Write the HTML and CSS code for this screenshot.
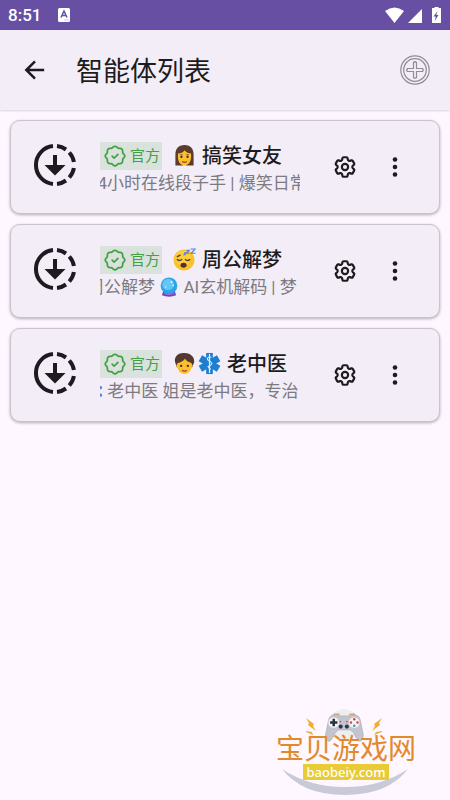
FILE: index.html
```html
<!DOCTYPE html>
<html lang="zh-CN">
<head>
<meta charset="utf-8">
<meta name="viewport" content="width=device-width, initial-scale=1">
<title>智能体列表</title>
<link rel="stylesheet" href="styles.css">
</head>
<body>
<svg class="defs" aria-hidden="true">
  <symbol id="agent" viewBox="0 0 50 50">
    <g fill="none" stroke="currentColor" stroke-width="4">
      <path d="M23 6.1A19 19 0 0 0 23 43.900"/>
      <path d="M27 6.1A19 19 0 0 1 36 9.500"/>
      <path d="M39.300 12.500A19 19 0 0 1 43.900 22"/>
      <path d="M43.900 28A19 19 0 0 1 39.300 37.500"/>
      <path d="M36 40.500A19 19 0 0 1 27 43.900"/>
    </g>
    <path fill="currentColor" d="M23 15h4v10h8.500L25 35.500 14.500 25H23z"/>
  </symbol>
  <symbol id="verified" viewBox="0 0 24 24">
    <g fill="none" stroke="currentColor" stroke-width="1.600" stroke-linecap="round" stroke-linejoin="round">
      <path d="M5 7.2A2.2 2.2 0 0 1 7.2 5h1a2.200 2.200 0 0 0 1.550-.64l.7-.7a2.200 2.200 0 0 1 3.120 0l.7.7c.412.41.97.64 1.550.64h1a2.200 2.200 0 0 1 2.200 2.200v1c0 .58.23 1.138.64 1.550l.7.7a2.200 2.200 0 0 1 0 3.120l-.7.7a2.200 2.200 0 0 0-.64 1.550v1a2.200 2.200 0 0 1-2.200 2.200h-1a2.200 2.200 0 0 0-1.550.64l-.7.7a2.200 2.200 0 0 1-3.120 0l-.7-.7a2.200 2.200 0 0 0-1.550-.64h-1a2.200 2.200 0 0 1-2.200-2.200v-1a2.200 2.200 0 0 0-.64-1.550l-.7-.7a2.200 2.200 0 0 1 0-3.120l.7-.7A2.200 2.200 0 0 0 5 8.200z"/>
      <path d="M9.300 12.200l1.900 1.700 3.500-3.300"/>
    </g>
  </symbol>
  <symbol id="gear" viewBox="0 0 24 24">
    <g fill="none" stroke="currentColor" stroke-width="2" stroke-linejoin="round">
      <path d="M9.594 3.940c.09-.542.56-.94 1.110-.94h2.593c.55 0 1.020.398 1.110.94l.213 1.281c.063.374.313.686.645.87.074.04.147.083.22.127.325.196.72.257 1.075.124l1.217-.456a1.125 1.125 0 0 1 1.370.49l1.296 2.247a1.125 1.125 0 0 1-.26 1.431l-1.003.827c-.293.241-.438.613-.43.992a7.723 7.723 0 0 1 0 .255c-.008.378.137.75.43.991l1.004.827c.424.35.534.955.26 1.430l-1.298 2.247a1.125 1.125 0 0 1-1.369.491l-1.217-.456c-.355-.133-.75-.072-1.076.124a6.470 6.470 0 0 1-.22.128c-.331.183-.581.495-.644.869l-.213 1.281c-.09.543-.56.94-1.110.94h-2.594c-.55 0-1.019-.398-1.110-.94l-.213-1.281c-.062-.374-.312-.686-.644-.87a6.520 6.520 0 0 1-.22-.127c-.325-.196-.72-.257-1.076-.124l-1.217.456a1.125 1.125 0 0 1-1.369-.49l-1.297-2.247a1.125 1.125 0 0 1 .26-1.431l1.004-.827c.292-.24.437-.613.43-.991a6.932 6.932 0 0 1 0-.255c.007-.38-.138-.751-.43-.992l-1.004-.827a1.125 1.125 0 0 1-.26-1.430l1.297-2.247a1.125 1.125 0 0 1 1.370-.491l1.216.456c.356.133.751.072 1.076-.124.072-.044.146-.087.22-.128.332-.183.582-.495.644-.869z"/>
      <circle cx="12" cy="12" r="2.900"/>
    </g>
  </symbol>
  <symbol id="dots" viewBox="0 0 24 24">
    <g fill="currentColor"><circle cx="12" cy="4.500" r="2.300"/><circle cx="12" cy="12" r="2.300"/><circle cx="12" cy="19.500" r="2.300"/></g>
  </symbol>
  <symbol id="woman" viewBox="0 0 24 24">
    <path fill="#5c3a2e" d="M12 1C5.500 1 2.500 5 2.500 11v11.500H10l2-1 2 1h7.500V11C21.500 5 18.500 1 12 1z"/>
    <path fill="#fbc02d" d="M12 6.500c2 2.500 4.500 3 6.800 3.500.7 7.500-1.800 12.500-6.800 12.500S4.500 17.500 5.200 10C8 9.500 10.500 9 12 6.500z"/>
    <circle cx="8.800" cy="13.500" r="1.200" fill="#40281f"/><circle cx="15.200" cy="13.500" r="1.200" fill="#40281f"/>
    <path d="M9.500 18.200q2.500 2 5 0" fill="none" stroke="#a8432a" stroke-width="1.200"/>
    <path d="M7.500 11.300h2.500M14 11.300h2.500" stroke="#5c3a2e" stroke-width=".9"/>
  </symbol>
  <symbol id="sleep" viewBox="0 0 24 24">
    <circle cx="11.500" cy="12.500" r="11" fill="#fbc12d"/>
    <circle cx="10.500" cy="10.500" r="8" fill="#ffd84a" opacity=".6"/>
    <path d="M4.500 12q2 2.200 4.500 0M13 12q2.500 2.200 4.500 0M4.500 9l3-1.500" fill="none" stroke="#5d4037" stroke-width="1.500" stroke-linecap="round"/>
    <ellipse cx="11" cy="18" rx="3.200" ry="2.600" fill="#4e342e"/>
    <path d="M18.500 1h4.500l-4 4.500h4.500M14 2.500h3l-3 3h3M11.500 5h2l-2 2h2" fill="none" stroke="#5b7fe0" stroke-width="1.200"/>
  </symbol>
  <symbol id="person" viewBox="0 0 24 24">
    <path fill="#543930" d="M11 1C4 1 1 6 2.300 11l1.700 5h16l2-5C23 5.500 18.500.5 11 1z"/>
    <path fill="#fbc02d" d="M4.800 11.500C8 11 11 9.500 12.500 7c1.500 2.500 4 3.500 6.700 4.500l.6 1.500c1 .3.800 3.200-.6 3.500-1 4-3.600 6.500-7.200 6.500s-6.200-2.500-7.200-6.500c-1.400-.3-1.600-3.200-.6-3.500z"/>
    <circle cx="8.500" cy="14.500" r="1.200" fill="#40281f"/><circle cx="15.500" cy="14.500" r="1.200" fill="#40281f"/>
    <path d="M9.500 19q2.500 2 5 0" fill="none" stroke="#a8432a" stroke-width="1.200"/>
  </symbol>
  <symbol id="medical" viewBox="0 0 24 24">
    <g fill="#1e7fd0"><path d="M8.500 1h7v22h-7z"/><path d="M8.500 1h7v22h-7z" transform="rotate(60 12 12)"/><path d="M8.500 1h7v22h-7z" transform="rotate(120 12 12)"/></g>
    <path d="M12 2v20" stroke="#e3f2fd" stroke-width="1.300"/>
    <path d="M14 5.500q-5-1-4 2.500 4 2 4.500 4-1 2.500-4 3.200 1 2.300 3 2.800" fill="none" stroke="#cfe8fb" stroke-width="1.200"/>
  </symbol>
  <symbol id="crystal" viewBox="0 0 24 24">
    <path fill="#6f45b8" d="M5 17h14l1.500 5q-8.500 3.500-17 0z"/>
    <circle cx="12" cy="10.500" r="10" fill="#2ba5ea"/>
    <circle cx="11" cy="9" r="7" fill="#63c6f6"/>
    <circle cx="15" cy="6" r="1.300" fill="#e1f5fe"/><circle cx="17" cy="10" r="1" fill="#e1f5fe"/><circle cx="8" cy="12" r=".8" fill="#e1f5fe"/>
    <path d="M6 20q6 2 12 0" stroke="#a77be0" fill="none"/>
  </symbol>
  <symbol id="stethoscope" viewBox="0 0 24 24">
    <g fill="none" stroke="#5c83c4" stroke-width="2"><path d="M5 3v6q4 6 8 0V3M9 12v5q5 7 10-1"/><circle cx="21" cy="8" r="1"/><circle cx="21" cy="17" r="1"/></g>
  </symbol>
</svg>

<div class="status">
  <span class="clock">8:51</span>
  <svg class="status-app" viewBox="0 0 12 14" aria-hidden="true"><rect width="12" height="14" rx="1.500" fill="#fff"/><path d="M3 9.500 6 3l3 6.500M4.200 7.500h3.600" fill="none" stroke="#6750a4" stroke-width="1.500"/><path d="M6 12h5" stroke="#c9c0e2" stroke-width=".8"/></svg>
  <svg class="status-signals" viewBox="0 0 58 18" aria-hidden="true">
    <g fill="#fff"><path d="M1 5Q10.500-2 20 5L10.500 17z"/><path d="M38 3v14H24z"/><path d="M48 2h2.500V1h4v1H57v15h-9z"/></g>
    <path d="M53.500 5 49.500 10.500h2.300l-1 4.500 3.700-6h-2.300z" fill="#6750a4"/>
  </svg>
</div>

<header class="appbar">
  <button class="icon-button" type="button" aria-label="返回">
    <svg class="back" viewBox="0 0 24 24"><path d="M22 12H3M12 2.500 2.500 12l9.500 9.500" fill="none" stroke="currentColor" stroke-width="2.700"/></svg>
  </button>
  <h1>智能体列表</h1>
  <button class="icon-button" type="button" aria-label="添加">
    <svg class="add" viewBox="0 0 30 30"><g fill="none" stroke="#8f8c94" stroke-width="1.200"><circle cx="15" cy="15" r="14.200"/><circle cx="15" cy="15" r="11.300"/><path d="M13.500 7.500q1.500-1.500 3 0v6h6q1.500 1.500 0 3h-6v6q-1.500 1.500-3 0v-6h-6q-1.500-1.500 0-3h6z"/></g></svg>
  </button>
</header>

<main class="list">
  <article class="card">
    <svg class="agent"><use href="#agent"/></svg>
    <div class="body">
      <div class="heading">
        <span class="badge"><svg><use href="#verified"/></svg>官方</span>
        <h2><svg class="emoji" role="img" aria-label="女人"><use href="#woman"/></svg> 搞笑女友</h2>
      </div>
      <p class="ticker"><span style="margin-left:-12px">24小时在线段子手 | 爆笑日常</span></p>
    </div>
    <button class="icon-button" type="button" aria-label="设置"><svg class="gear"><use href="#gear"/></svg></button>
    <button class="icon-button" type="button" aria-label="更多"><svg class="dots"><use href="#dots"/></svg></button>
  </article>

  <article class="card">
    <svg class="agent"><use href="#agent"/></svg>
    <div class="body">
      <div class="heading">
        <span class="badge"><svg><use href="#verified"/></svg>官方</span>
        <h2><svg class="emoji" role="img" aria-label="睡觉"><use href="#sleep"/></svg> 周公解梦</h2>
      </div>
      <p class="ticker"><span style="margin-left:-13px">周公解梦 <svg class="emoji" role="img" aria-label="水晶球"><use href="#crystal"/></svg> AI玄机解码 | 梦</span></p>
    </div>
    <button class="icon-button" type="button" aria-label="设置"><svg class="gear"><use href="#gear"/></svg></button>
    <button class="icon-button" type="button" aria-label="更多"><svg class="dots"><use href="#dots"/></svg></button>
  </article>

  <article class="card">
    <svg class="agent"><use href="#agent"/></svg>
    <div class="body">
      <div class="heading">
        <span class="badge"><svg><use href="#verified"/></svg>官方</span>
        <h2><svg class="emoji" role="img" aria-label="人"><use href="#person"/></svg><svg class="emoji" role="img" aria-label="医疗"><use href="#medical"/></svg> 老中医</h2>
      </div>
      <p class="ticker"><span style="margin-left:-17px"><svg class="emoji" role="img" aria-label="听诊器"><use href="#stethoscope"/></svg> 老中医 姐是老中医，专治</span></p>
    </div>
    <button class="icon-button" type="button" aria-label="设置"><svg class="gear"><use href="#gear"/></svg></button>
    <button class="icon-button" type="button" aria-label="更多"><svg class="dots"><use href="#dots"/></svg></button>
  </article>
</main>

<footer class="brand">
  <svg class="brand-art" viewBox="0 0 140 92" aria-hidden="true">
    <circle cx="68" cy="17" r="16" fill="#efedf0"/>
    <g transform="translate(11 3) scale(.82)">
    <path d="M57 4h7M76 4h7" stroke="#e8aa3c" stroke-width="2"/>
    <path d="M56 5q5-2 9 1h10q4-3 9-1 5 1 6 9l3 15q0 7-4 8-3 0-7-9-3-5-6-5H64q-3 0-6 5-4 9-7 9-4-1-4-8l3-15q1-8 6-9z" fill="#c4c4cf" stroke="#9898a8" stroke-width=".6"/>
    <circle cx="57" cy="14" r="6.500" fill="#f4f4f7"/><circle cx="82" cy="14" r="6.500" fill="#f4f4f7"/>
    <path d="M57 9.500v9M52.500 14h9" stroke="#26323f" stroke-width="3"/>
    <g fill="#d94040"><circle cx="82" cy="10" r="1.500"/><circle cx="78" cy="14" r="1.500"/><circle cx="86" cy="14" r="1.500"/><circle cx="65" cy="13" r="1"/><circle cx="73" cy="13" r="1"/></g>
    <circle cx="82" cy="18" r="1.500" fill="#3a91bd"/>
    <circle cx="65.500" cy="19" r="2.500" fill="#243b4a"/><circle cx="73" cy="19" r="2.500" fill="#243b4a"/>
    </g>
    <g fill="#f2ad35"><path d="M30 10l8 6-1 2 3 5-8-6 1-2zM30 23l6 1 1 3-7-3zM106 10l-8 6 1 2-3 5 8-6-1-2zM106 23l-6 1-2 3 8-3z"/></g>
    <path d="M6 61Q33 79 69 79t63-18Q112 87 69 87T6 61z" fill="#c9cad8"/>
  </svg>
  <div class="brand-name">宝贝游戏网</div>
  <div class="brand-site">baobeiy.com</div>
</footer>
</body>
</html>
```
FILE: styles.css
```css
* {
  box-sizing: border-box;
}

body {
  margin: 0;
  min-height: 100vh;
  display: flex;
  flex-direction: column;
  background: #fef7ff;
  color: #1d1b20;
  font-family: Roboto, "Noto Sans CJK SC", sans-serif;
}

h1, h2, p {
  margin: 0;
}

svg {
  display: block;
  flex: none;
}

.defs {
  position: absolute;
  width: 0;
  height: 0;
}

.status {
  display: flex;
  align-items: center;
  height: 30px;
  padding: 0 8px;
  background: #6750a4;
  color: #fff;
}

.clock {
  font-size: 17px;
  font-weight: 500;
  line-height: 32px;
}

.status-app {
  width: 12px;
  height: 14px;
  margin-left: 17px;
}

.status-signals {
  width: 58px;
  height: 18px;
  margin-left: auto;
}

.appbar {
  display: flex;
  align-items: center;
  height: 80px;
  padding: 0 10px;
  background: #f3edf7;
  box-shadow: 0 1px 2px rgba(0, 0, 0, 0.15);
}

.appbar h1 {
  flex: 1;
  padding: 4px 0 0 16px;
  font-size: 27px;
  font-weight: 400;
  line-height: 40px;
}

.icon-button {
  display: flex;
  flex: none;
  align-items: center;
  justify-content: center;
  width: 50px;
  height: 50px;
  padding: 0;
  border: 0;
  background: none;
  color: inherit;
}

.back {
  width: 22px;
  height: 22px;
}

.add {
  width: 30px;
  height: 30px;
}

.list {
  display: flex;
  flex-direction: column;
  gap: 10px;
  padding: 10px;
}

.card {
  display: flex;
  align-items: center;
  padding: 18px 19px;
  border: 1px solid #cac4d0;
  border-radius: 10px;
  background: #f3edf7;
  box-shadow: 0 1px 3px rgba(0, 0, 0, 0.3);
}

.agent {
  width: 50px;
  height: 50px;
  margin-bottom: 4px;
}

.body {
  flex: 1;
  min-width: 0;
  margin: 0 20px;
  padding-top: 3px;
}

.heading {
  display: flex;
  align-items: center;
  gap: 10px;
}

.badge {
  display: flex;
  align-items: center;
  gap: 2px;
  height: 28px;
  padding: 0 2px;
  background: #dae2dd;
  color: #43a047;
  font-size: 15px;
  line-height: 28px;
  white-space: nowrap;
}

.badge svg {
  width: 26px;
  height: 26px;
}

h2 {
  font-size: 20px;
  font-weight: 500;
  line-height: 26px;
  white-space: nowrap;
}

.emoji {
  display: inline-block;
  width: 25px;
  height: 23px;
  vertical-align: -4px;
}

.ticker {
  overflow: hidden;
  height: 25px;
  color: #7d7a80;
  font-size: 17px;
  line-height: 26px;
  white-space: nowrap;
}

.ticker .emoji {
  width: 20px;
  height: 20px;
}

.gear {
  width: 26px;
  height: 26px;
}

.dots {
  width: 24px;
  height: 24px;
}

.brand {
  position: relative;
  width: 140px;
  margin: auto 34px 0 auto;
  padding: 28px 0 20px;
  text-align: center;
}

.brand-art {
  position: absolute;
  top: 0;
  left: 0;
  width: 140px;
  height: 92px;
}

.brand-name {
  position: relative;
  color: #e08a2c;
  font-size: 28px;
  font-weight: 400;
  line-height: 28px;
  white-space: nowrap;
}

.brand-site {
  position: relative;
  width: 86px;
  margin: 0 auto;
  background: #e8cb35;
  color: #fff;
  font-family: "Noto Sans", sans-serif;
  font-size: 13px;
  font-weight: 500;
  line-height: 16px;
}
```
